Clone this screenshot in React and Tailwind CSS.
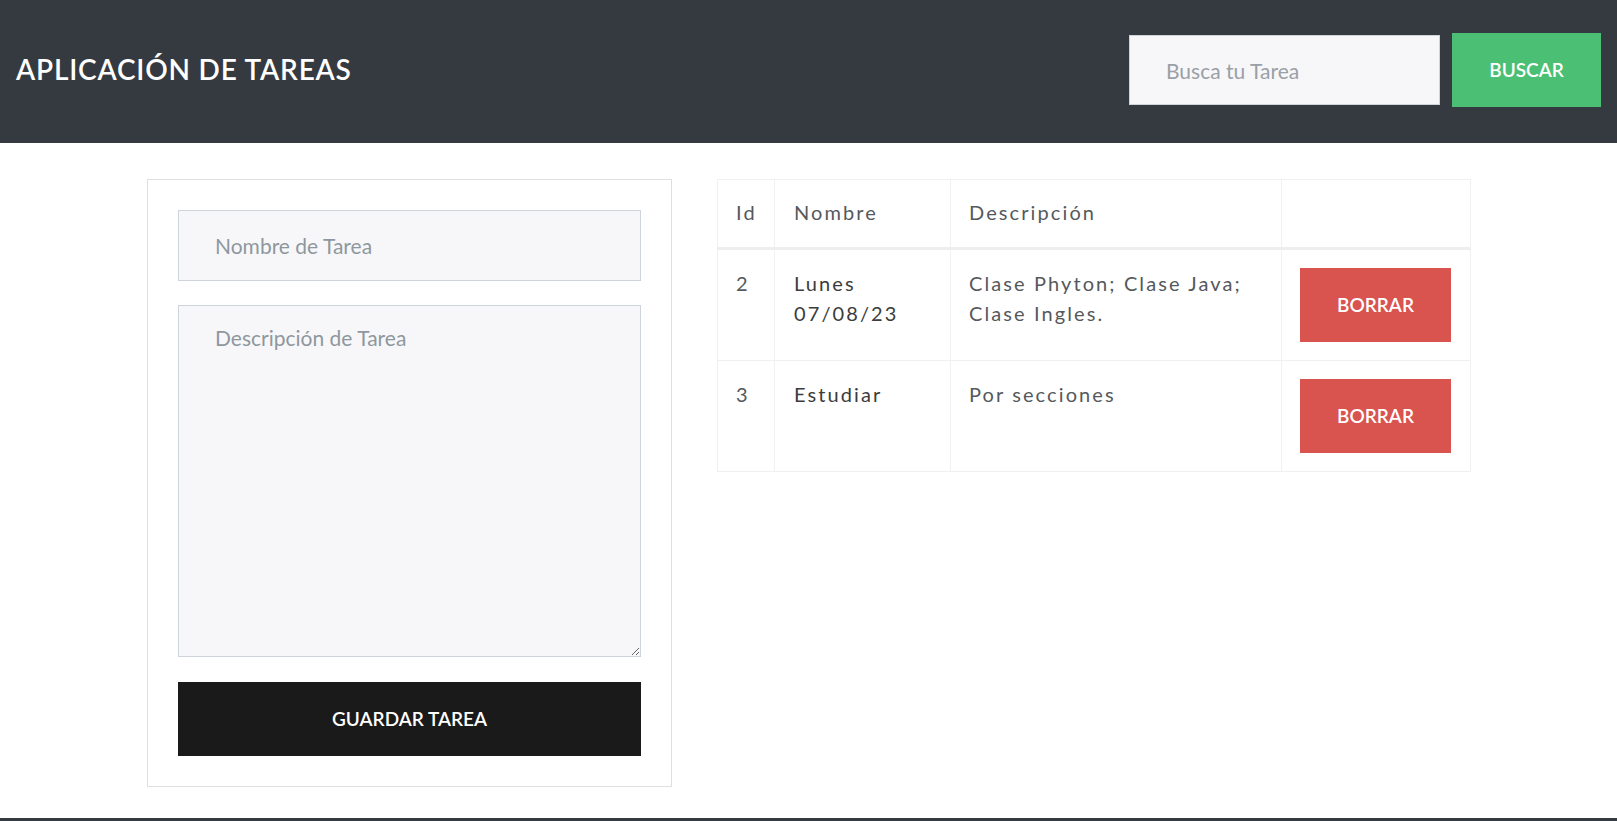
import React from 'react';

const tasks = [
  { id: 2, name: ['Lunes', '07/08/23'], desc: ['Clase Phyton; Clase Java;', 'Clase Ingles.'] },
  { id: 3, name: ['Estudiar'], desc: ['Por secciones'] },
];

// Header with brand and search
const Header = () => (
  <header className="h-[143px] shrink-0 bg-[#343a40] flex items-center justify-between px-4 pb-[3px]">
    <h1 className="text-white text-[28px] font-semibold tracking-[0.8px] leading-none pb-[3px]">
      APLICACIÓN DE TAREAS
    </h1>
    <div className="flex items-center gap-3">
      <input
        type="text"
        placeholder="Busca tu Tarea"
        className="w-[311px] h-[70px] bg-[#f7f7f9] border border-[#ced4da] pl-9 pr-4 text-[21px] text-[#55595c] placeholder:text-[#9aa0a6] outline-none"
      />
      <button className="w-[149px] h-[74px] bg-[#4bbf73] text-white text-[19px] font-semibold">
        BUSCAR
      </button>
    </div>
  </header>
);

// Form card for new task
const TaskForm = () => (
  <div className="w-[525px] shrink-0 border border-[#dfdfdf] p-[30px] flex flex-col">
    <input
      type="text"
      placeholder="Nombre de Tarea"
      className="w-full h-[71px] bg-[#f7f7f9] border border-[#ced4da] pl-9 pr-4 text-[21px] text-[#55595c] placeholder:text-[#8f979e] outline-none"
    />
    <textarea
      placeholder="Descripción de Tarea"
      className="mt-6 w-full h-[352px] bg-[#f7f7f9] border border-[#ced4da] pl-9 pr-4 pt-[17px] text-[21px] leading-[30px] text-[#55595c] placeholder:text-[#8f979e] outline-none"
    />
    <button className="mt-[25px] w-full h-[74px] bg-[#1a1a1a] text-white text-[19px] font-semibold">
      GUARDAR TAREA
    </button>
  </div>
);

// Task table
const TaskTable = () => (
  <table className="w-[753px] shrink-0 table-fixed border-collapse self-start text-[20px] leading-[30px] tracking-[2.1px]">
    <colgroup>
      <col className="w-[57px]" />
      <col className="w-[176px]" />
      <col className="w-[331px]" />
      <col className="w-[189px]" />
    </colgroup>
    <thead>
      <tr className="h-[69px] border-b-[3px] border-b-[#eeeeee]">
        <th className="border border-[#f0f0f0] px-[18px] pb-[3px] text-left font-normal text-[#55595c]">Id</th>
        <th className="border border-[#f0f0f0] px-[19px] pb-[3px] text-left font-normal text-[#55595c]">Nombre</th>
        <th className="border border-[#f0f0f0] px-[18px] pb-[3px] text-left font-normal text-[#55595c]">Descripción</th>
        <th className="border border-[#f0f0f0]"></th>
      </tr>
    </thead>
    <tbody>
      {tasks.map((t) => (
        <tr key={t.id}>
          <td className="border border-[#f0f0f0] px-[18px] pt-[18px] align-top text-[#55595c]">{t.id}</td>
          <td className="border border-[#f0f0f0] px-[19px] pt-[18px] align-top font-normal text-[#3c3c3c]">
            {t.name.map((n) => (
              <div key={n}>{n}</div>
            ))}
          </td>
          <td className="border border-[#f0f0f0] px-[18px] pt-[18px] align-top text-[#55595c]">
            {t.desc.map((d) => (
              <div key={d}>{d}</div>
            ))}
          </td>
          <td className="border border-[#f0f0f0] p-[18px] align-top">
            <button className="w-[151px] h-[74px] bg-[#d9534f] text-white text-[19px] font-semibold tracking-normal">
              BORRAR
            </button>
          </td>
        </tr>
      ))}
    </tbody>
  </table>
);

export default function App() {
  return (
    <div className="h-[821px] overflow-hidden bg-white flex flex-col" style={{ fontFamily: 'Lato, "Noto Sans", sans-serif' }}>
      <Header />
      <main className="w-[1323px] mx-auto mt-9 flex gap-[45px]">
        <TaskForm />
        <TaskTable />
      </main>
      <footer className="mt-[31px] h-[20px] shrink-0 bg-[#343a40]"></footer>
    </div>
  );
}
